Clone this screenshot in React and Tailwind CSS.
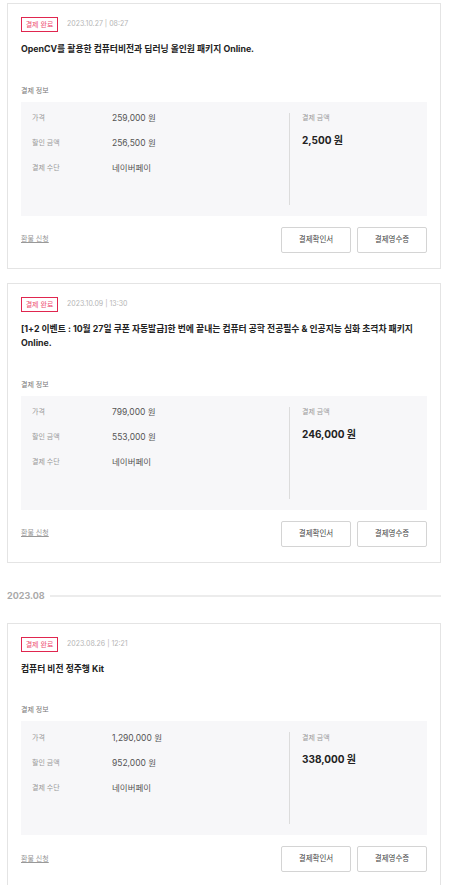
import React from 'react';

const orders = [
  {
    date: '2023.10.27 | 08:27',
    title: 'OpenCV를 활용한 컴퓨터비전과 딥러닝 올인원 패키지 Online.',
    price: '259,000 원',
    discount: '256,500 원',
    method: '네이버페이',
    paid: '2,500 원',
  },
  {
    date: '2023.10.09 | 13:30',
    title: '[1+2 이벤트 : 10월 27일 쿠폰 자동발급]한 번에 끝내는 컴퓨터 공학 전공필수 & 인공지능 심화 초격차 패키지 Online.',
    price: '799,000 원',
    discount: '553,000 원',
    method: '네이버페이',
    paid: '246,000 원',
  },
];

const august = [
  {
    date: '2023.08.26 | 12:21',
    title: '컴퓨터 비전 정주행 Kit',
    price: '1,290,000 원',
    discount: '952,000 원',
    method: '네이버페이',
    paid: '338,000 원',
  },
];

const Row = ({ label, value }) => (
  <div className="flex items-center h-[12px]">
    <span className="w-[80px] text-[7px] text-[#9a9a9a]">{label}</span>
    <span className="text-[8.5px] text-[#555]">{value}</span>
  </div>
);

const OrderCard = ({ order }) => {
  return (
    <div className="w-[434px] border border-[#e4e4e4] bg-white pt-[13px] px-[13px] pb-[15px]">
      <div className="flex items-center gap-[9px]">
        <div className="w-[37px] h-[15px] border border-[#e0264f] flex items-center justify-center text-[7px] text-[#ee5273] leading-none">
          결제 완료
        </div>
        <span className="text-[7px] text-[#b5b5b5]">{order.date}</span>
      </div>
      <p className="mt-[10px] text-[8.8px] leading-[14.5px] font-bold text-[#222] pr-[10px]">{order.title}</p>
      <p className="mt-[29px] text-[7px] leading-[10px] text-[#777]">결제 정보</p>
      <div className="mt-[6px] h-[114px] bg-[#f7f7f9] flex py-[11px]">
        <div className="w-[268px] pl-[11px] flex flex-col gap-[13px]">
          <Row label="가격" value={order.price} />
          <Row label="할인 금액" value={order.discount} />
          <Row label="결제 수단" value={order.method} />
        </div>
        <div className="w-px bg-[#dcdcdc]"></div>
        <div className="pl-[12px]">
          <p className="h-[12px] flex items-center text-[7px] text-[#9a9a9a]">결제 금액</p>
          <p className="mt-[8px] text-[10px] leading-[14px] font-bold text-[#222]">{order.paid}</p>
        </div>
      </div>
      <div className="mt-[11px] flex items-center justify-between">
        <a className="text-[7px] text-[#999] underline">환불 신청</a>
        <div className="flex gap-[6px]">
          <button className="w-[70px] h-[26px] border border-[#d4d4d4] rounded-[2px] bg-white text-[7.5px] text-[#444]">결제확인서</button>
          <button className="w-[70px] h-[26px] border border-[#d4d4d4] rounded-[2px] bg-white text-[7.5px] text-[#444]">결제영수증</button>
        </div>
      </div>
    </div>
  );
};

export default function App() {
  return (
    <div
      className="min-h-screen bg-white pl-[7px] pt-[3px]"
      style={{ fontFamily: 'Inter, "Noto Sans CJK KR", sans-serif' }}
    >
      <div className="flex flex-col gap-[14px]">
        {orders.map((o) => (
          <OrderCard key={o.date} order={o} />
        ))}
      </div>
      <div className="mt-[27px] w-[434px] flex items-center gap-[5px] h-[13px]">
        <span className="text-[9px] font-bold text-[#aaa]">2023.08</span>
        <div className="flex-1 h-[2px] bg-[#ececec]"></div>
      </div>
      <div className="mt-[20px] flex flex-col gap-[14px]">
        {august.map((o) => (
          <OrderCard key={o.date} order={o} />
        ))}
      </div>
    </div>
  );
}
